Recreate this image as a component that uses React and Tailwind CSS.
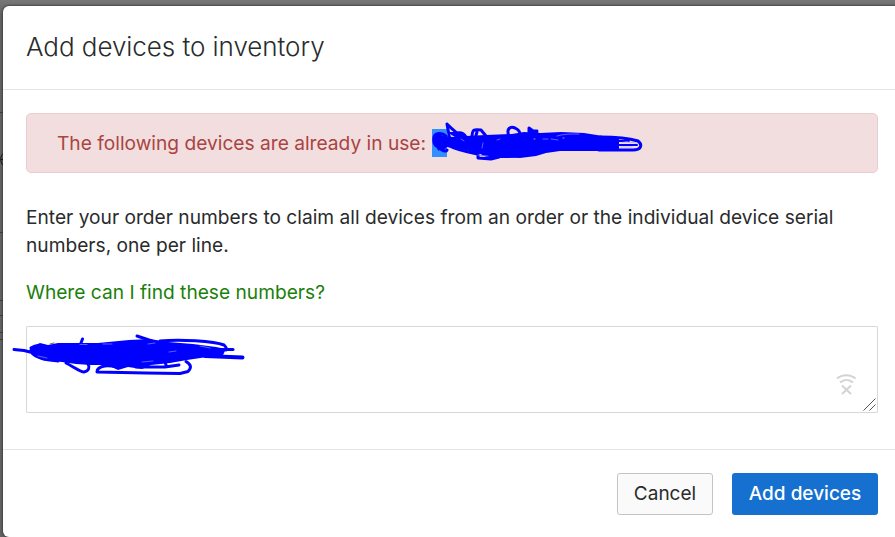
import React, { useState } from "react";

// rows of the table behind the overlay
const Backdrop = () => (
  <svg
    className="absolute inset-y-0 left-0 pointer-events-none"
    width="3"
    height="537"
    viewBox="0 0 3 537"
  >
    <path
      d="M0 112.5h3M0 232.5h3M0 300.5h3M0 315.5h3M0 332.5h3M0 339.5h3"
      stroke="#3a3a3a"
    />
    <path d="M3 154C0 155 0 163 3 165M1 159.5h2" stroke="#151515" fill="none" />
  </svg>
);

const AlertScribble = () => (
  <svg
    className="absolute left-[432px] top-[120px] pointer-events-none"
    width="214"
    height="42"
    viewBox="432 120 214 42"
    fill="none"
    stroke="#0000ff"
    strokeWidth="3"
    strokeLinecap="round"
    strokeLinejoin="round"
  >
    <path
      fill="#0000ff"
      stroke="none"
      d="M434 137L438 134L447 137L449 132L457 132L466 136L486 135L512 134L524 132L540 133L561 132L584 133L603 136L612 138L619 139L619 150L600 151L560 151L546 153L536 156L520 158L502 157L480 154L465 150L447 147L444 150L437 147Z"
    />
    <path d="M446 136c-4-4-11-3-12 1-1 6 1 9 5 10 3 4 7 5 8 3" />
    <path d="M437 145l2 4M436 140l2 6" />
    <path d="M447 124c5 5 10 10 15 12M447 124l2 11M456 133c5-1 8 0 10 4M472 138c0-9 2-9 9-8l5 6M477 132l-2 7" />
    <path d="M509 136c-3-7 1-10 6-8 4 2 5 5 5 6M529 135v-7l4 3h4M531 132l6 1" />
    <path d="M448 145c8 5 20 7 30 9M478 154v4l13 1 8-2M483 154c8 3 20 3 34 2M487 158h8" />
    <path d="M600 137c16 0 28 1 38 4 5 4 3 9-5 9h-34" />
    <path d="M619 145h18M619 141h10" strokeWidth="2" />
    <path
      d="M622 142.500c5-1 8 0 14 .5M621 147l11 0"
      stroke="#c9b6ea"
      strokeWidth="1.2"
    />
    <path
      d="M557 136c6-2 14-2 22-2M543 139l5 0M551 139l7 1M478 155l10 1M461 139l3 2M497 140l3-1M483 143l-1 5"
      stroke="#7777ff"
      strokeWidth="0.8"
    />
    <path d="M450 134l1 3 4 0z" fill="#d8c4e6" stroke="none" />
    <path d="M534 139h1M563 138h1" stroke="#b58cae" strokeWidth="1" />
  </svg>
);

const SerialScribble = () => (
  <svg
    className="absolute left-[10px] top-[333px] pointer-events-none"
    width="238"
    height="45"
    viewBox="10 333 238 45"
    fill="none"
    stroke="#0000ff"
    strokeWidth="3"
    strokeLinecap="round"
    strokeLinejoin="round"
  >
    <path
      fill="#0000ff"
      stroke="none"
      d="M29 351L31 347L40 343L48 345L58 343L78 343L98 343L129 340L150 339L168 342L193 344L216 347L226 349L223 355L207 357L187 360L170 363L151 365L142 369L128 367L118 370L108 365L91 365L76 364L62 362L42 360L33 355Z"
    />
    <path d="M14 349.5l10 1 8 2M31 352c5 7 18 8 27 9M31 348c4-3 8-3 13-2" />
    <path d="M79 348l2-5 1.500-4M66 363c8 4 14 9 18 9 5-1 6-5 4-8" />
    <path d="M137 336l15 5M160 341c19-2 54 0 64 4 2 2 3 4 2 5" />
    <path d="M218 349.5h15" />
    <path d="M205 356l37.500 1.500" strokeWidth="4" />
    <path d="M116 367c-11-3-19 0-19 5l49 1 34 .5 8-2c4-4 3-7-2-10M136 367h29l14-2M165 362l1 3" />
    <path
      d="M38 356l9 2M80 344.500h7M103 344h9M148 344l7-1M169 352l7-1M142 362l11-1M200 346l10 2"
      stroke="#9a9aff"
      strokeWidth="0.6"
    />
    <path d="M50 344l4-1" stroke="#6b6650" strokeWidth="1" />
  </svg>
);

const NoSignalIcon = () => (
  <svg
    width="22"
    height="24"
    viewBox="0 0 22 24"
    fill="none"
    stroke="#d3d3d3"
    strokeWidth="2"
  >
    <path d="M2 6.500C7 2 15.500 2 20.500 6.500M5 10.500C9 7 14 7 18 10.500M7 13.500l9 8.500M16 13.500l-9 8.500" />
  </svg>
);

const App = () => {
  const [serials, setSerials] = useState("");

  return (
    <div className="relative h-[537px] w-[895px] overflow-hidden bg-[#656565] bg-linear-to-b from-[#777777] to-[#636363] to-3% pl-[3px] pt-[6px] font-['Inter',sans-serif] text-[#292b2c] antialiased">
      <Backdrop />
      <div className="flex h-[531px] w-[900px] flex-col rounded-l-[6px] bg-white shadow-[0_0_2px_1px_rgba(0,0,0,0.35)]">
        <header className="flex h-[84px] shrink-0 items-center border-b border-[#e5e5e5] pb-[2px] pl-[23px]">
          <h2 className="text-[26px] font-light leading-8 tracking-[-0.05px]">
            Add devices to inventory
          </h2>
        </header>

        <main className="flex w-[875px] flex-col pl-[23px] pt-[23px] text-[19.17px]">
          <div className="flex h-[60px] items-center rounded-[5px] border border-[#ebccd1] bg-[#f2dede] pl-[30px] text-[#a94442]">
            <span className="w-[375px] whitespace-nowrap">
              The following devices are already in use:
            </span>
            <span className="h-7 w-[15px] bg-[#338fff]"></span>
          </div>

          <p className="mt-[30px] whitespace-nowrap leading-7">
            Enter your order numbers to claim all devices from an order or the
            individual device serial
            <br />
            numbers, one per line.
          </p>
          <a
            href="#"
            className="mt-[19px] self-start whitespace-nowrap leading-7 text-[#1b7f0b]"
          >
            Where can I find these numbers?
          </a>

          <div className="relative mt-5 h-[87px]">
            <textarea
              aria-label="Serial numbers"
              value={serials}
              onChange={(e) => setSerials(e.target.value)}
              className="block h-full w-full resize-none rounded-[1px] border border-[#d8d8d8] bg-white p-3 outline-none"
            />
            <div className="pointer-events-none absolute right-[21px] top-[46px]">
              <NoSignalIcon />
            </div>
            <svg
              className="pointer-events-none absolute bottom-[2px] right-[2px]"
              width="13"
              height="13"
              viewBox="0 0 13 13"
              stroke="#555"
            >
              <path d="M0.500 12.500l12-12M6.500 12.500l6-6" />
            </svg>
          </div>
        </main>

        <footer className="mt-[36px] flex w-[892px] flex-1 justify-end gap-[19px] border-t border-[#e5e5e5] pr-[17px] pt-[23px] text-[19px]">
          <button
            type="button"
            className="h-[42px] w-[96px] cursor-pointer rounded-[3px] border border-[#c4c4c4] bg-[#fafafa]"
          >
            Cancel
          </button>
          <button
            type="button"
            className="h-[42px] w-[146px] cursor-pointer whitespace-nowrap rounded-[3px] bg-[#1570cf] font-medium text-white"
          >
            Add devices
          </button>
        </footer>
      </div>
      <AlertScribble />
      <SerialScribble />
    </div>
  );
};

export default App;
